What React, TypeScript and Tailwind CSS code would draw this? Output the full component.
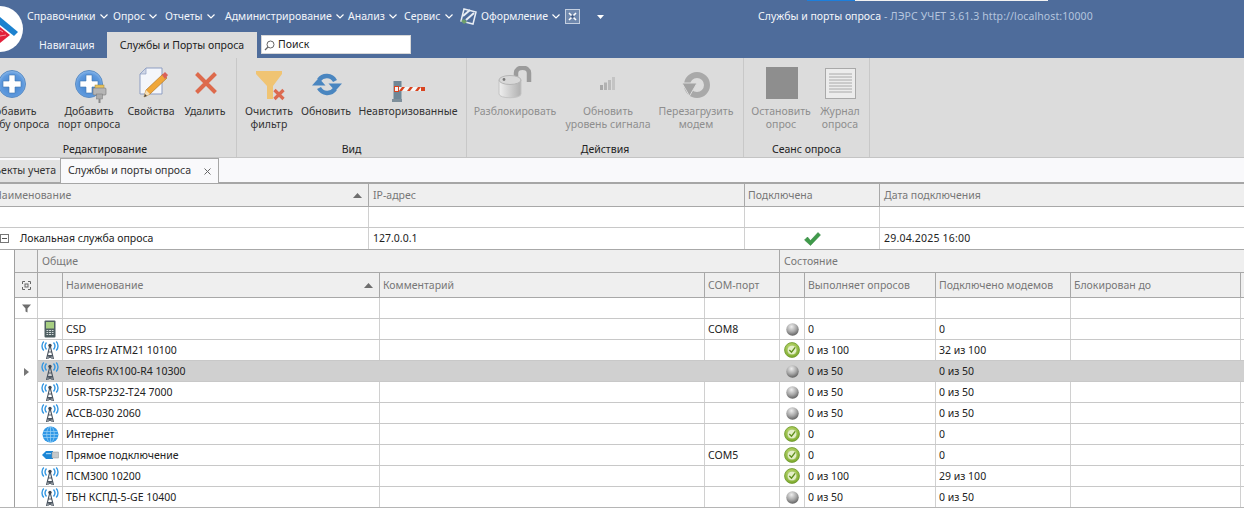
import React from "react";

const F = "font-['Noto_Sans','Liberation_Sans',sans-serif]";

function Sphere({ port = false }: { port?: boolean }) {
  return (
    <svg width="36" height="34" viewBox="0 0 36 34" className="ml-[8px] mt-[8px]">
      <defs>
        <radialGradient id="sph" cx="50%" cy="55%" r="65%">
          <stop offset="0%" stopColor="#3f7fca" />
          <stop offset="65%" stopColor="#5f9ade" />
          <stop offset="100%" stopColor="#b4d4f3" />
        </radialGradient>
      </defs>
      <circle cx="14" cy="14" r="13.500" fill="url(#sph)" stroke="#5a8cc4" />
      <path d="M11 5h6v6h6v6h-6v6h-6v-6H5v-6h6z" fill="#fff" stroke="#3f75b0" strokeWidth="0.600" />
      {port && (
        <g>
          <rect x="20" y="15" width="9" height="4" fill="#e9c35f" stroke="#a98a35" strokeWidth="0.500" />
          <rect x="18" y="18" width="13" height="7" rx="1" fill="#b5b5b5" stroke="#777" strokeWidth="0.600" />
          <rect x="21.500" y="24" width="6" height="5" fill="#aaa" stroke="#777" strokeWidth="0.500" />
          <path d="M24.500 29v4" stroke="#888" strokeWidth="2" />
        </g>
      )}
    </svg>
  );
}

function Doc() {
  return (
    <svg width="30" height="32" viewBox="0 0 30 32" className="ml-[5px]">
      <path d="M7 1h16v26H1V7z" fill="#f4f6fb" stroke="#8d9dc2" />
      <path d="M7 1v6H1z" fill="#cfd6e6" stroke="#8d9dc2" strokeWidth="0.700" />
      <path d="M5 30l2-7L24 7l4 4-17 16z" fill="#f0a73a" stroke="#a96d1a" strokeWidth="0.600" />
      <path d="M23 8l3-3 3 3-3 4z" fill="#d9615a" />
      <path d="M5 30l2-7 4 4z" fill="#f5dfb8" />
      <path d="M5 30l1-3 2 2z" fill="#444" />
    </svg>
  );
}

function Cross() {
  return (
    <svg width="24" height="24" viewBox="0 0 24 24" className="ml-[1px]">
      <path d="M2.500 2.500l19 19M21.500 2.500l-19 19" stroke="#dd6a4c" strokeWidth="4" />
    </svg>
  );
}

function Funnel() {
  return (
    <svg width="30" height="30" viewBox="0 0 30 30" className="ml-[4px] mt-[5px]">
      <path d="M0 0h26v3L17 15v13h-6V15L0 3z" fill="#f0c473" />
      <path d="M18.500 19l9 9M27.500 19l-9 9" stroke="#dc6a50" strokeWidth="3.200" />
    </svg>
  );
}

function Refresh() {
  return (
    <svg width="30" height="23" viewBox="0 0 30 23" className="ml-[2px] mt-[2px]">
      <g fill="none" stroke="#4a86c0" strokeWidth="4.500">
        <path d="M7 7A9.500 9.500 0 0 1 23 8" />
        <path d="M23 16A9.500 9.500 0 0 1 7 15" />
      </g>
      <path d="M16.500 10.500H30L23.250 18z" fill="#4a86c0" />
      <path d="M0 12.500h13.500L6.750 5z" fill="#4a86c0" />
    </svg>
  );
}

function Barrier() {
  return (
    <svg width="33" height="32" viewBox="0 0 33 32" className="mt-[8px] ml-[1px]">
      <rect x="1.500" y="10" width="8" height="18" fill="#6f8796" />
      <rect x="0" y="28" width="10" height="3" fill="#7e8f9b" />
      <rect x="2" y="16" width="31" height="4" fill="#f5f5f5" />
      <path d="M7 20l3-4h3l-3 4zM15 20l3-4h3l-3 4zM23 20l3-4h3l-3 4z" fill="#d9441f" />
      <rect x="29" y="16" width="4" height="4" fill="#d9441f" />
      <rect x="2.500" y="15.500" width="4" height="5" fill="#f5f5f5" stroke="#d9441f" />
    </svg>
  );
}

function Lock() {
  return (
    <svg width="34" height="34" viewBox="0 0 34 34">
      <defs>
        <linearGradient id="lk" x1="0" x2="1">
          <stop offset="0" stopColor="#efefef" />
          <stop offset="1" stopColor="#b0b0b0" />
        </linearGradient>
      </defs>
      <path d="M18 14V7c0-7 13-7 13 0v9" fill="none" stroke="#9b9b9b" strokeWidth="4.500" />
      <path d="M1 14v14c0 5 22 5 22 0V14z" fill="url(#lk)" stroke="#c4c4c4" />
      <ellipse cx="12" cy="14" rx="11" ry="4.500" fill="#d8d8d8" stroke="#b5b5b5" />
      <circle cx="6" cy="13.500" r="1.400" fill="#777" />
    </svg>
  );
}

function Signal() {
  return (
    <svg width="16" height="13" viewBox="0 0 16 13">
      <rect x="0" y="8" width="3" height="5" fill="#a8a8a8" />
      <rect x="4" y="5.500" width="3" height="7.500" fill="#b2b2b2" />
      <rect x="8" y="3" width="3" height="10" fill="#bbbbbb" />
      <rect x="12" y="0" width="3" height="13" fill="#c4c4c4" />
    </svg>
  );
}

function Reload() {
  return (
    <svg width="32" height="30" viewBox="0 0 32 30" className="mt-[3px]">
      <circle cx="17" cy="15" r="10" fill="none" stroke="#a9a9a9" strokeWidth="6" />
      <path d="M2 13h15l-7.500 13z" fill="#a3a3a3" stroke="#dcdcdc" strokeWidth="1" />
    </svg>
  );
}

function Journal() {
  return (
    <svg width="31" height="31" viewBox="0 0 31 31" className="mt-[1px]">
      <rect x="0.500" y="0.500" width="30" height="30" fill="#ececec" stroke="#a9a9a9" />
      <path d="M4 6h23M4 9h23M4 12h23M4 15h23M4 18h23M4 21h23M4 24h23" stroke="#9a9a9a" strokeWidth="0.800" />
    </svg>
  );
}

function Antenna() {
  return (
    <svg width="18" height="18" viewBox="0 0 18 18">
      <g fill="none" stroke="#3497e2" strokeWidth="1.400">
        <path d="M5.500 1.500C3.800 3.500 3.800 6.500 5.500 8.500" />
        <path d="M2.800 0.500C0.400 3 0.400 7 2.800 9.500" />
        <path d="M12.500 1.500C14.200 3.500 14.200 6.500 12.500 8.500" />
        <path d="M15.200 0.500C17.600 3 17.600 7 15.200 9.500" />
      </g>
      <g fill="none" stroke="#4b5560" strokeWidth="1.100">
        <path d="M9 4L5.500 18M9 4l3.500 14M7.300 11h3.400M6.500 14.500h5M6.500 14.500l5 3M11.500 14.500l-5 3" />
      </g>
      <circle cx="9" cy="4.500" r="1.700" fill="#3d4650" />
    </svg>
  );
}

function Phone() {
  return (
    <svg width="12" height="18" viewBox="0 0 12 18">
      <rect x="0.500" y="0.500" width="11" height="17" rx="1" fill="#4f5f62" />
      <rect x="2" y="2" width="8" height="6.500" fill="#a7cf82" />
      <path d="M2.500 10.500h7M2.500 12.500h7M2.500 14.500h7" stroke="#d3dadb" strokeWidth="1" />
      <path d="M4.500 10v6M7.500 10v6" stroke="#4f5f62" strokeWidth="0.800" />
    </svg>
  );
}

function Globe() {
  return (
    <svg width="17" height="17" viewBox="0 0 17 17">
      <circle cx="8.500" cy="8.500" r="8" fill="#2f97e6" />
      <g fill="none" stroke="#9dd2f5" strokeWidth="0.700">
        <ellipse cx="8.500" cy="8.500" rx="3.800" ry="8" />
        <path d="M8.500 0.500v16M1 5.500h15M0.500 8.500h16M1 11.500h15" />
      </g>
    </svg>
  );
}

function Usb() {
  return (
    <svg width="17" height="10" viewBox="0 0 17 10">
      <path d="M0 5l4-4h7v8H4z" fill="#1b86d6" />
      <rect x="10" y="2" width="6.500" height="6" fill="#c6c9cb" stroke="#8d9092" strokeWidth="0.500" />
      <rect x="4" y="3" width="5" height="1.200" fill="#9fd3f6" />
    </svg>
  );
}

function Gray() {
  return (
    <svg width="13" height="13" viewBox="0 0 13 13">
      <defs>
        <radialGradient id="gr" cx="42%" cy="28%" r="75%">
          <stop offset="0" stopColor="#eeeeee" />
          <stop offset="0.55" stopColor="#a8a8a8" />
          <stop offset="1" stopColor="#5e5e5e" />
        </radialGradient>
      </defs>
      <circle cx="6.500" cy="6.500" r="6.200" fill="url(#gr)" />
    </svg>
  );
}

function GreenOk() {
  return (
    <svg width="16" height="16" viewBox="0 0 15 15">
      <defs>
        <radialGradient id="gn" cx="45%" cy="35%" r="75%">
          <stop offset="0" stopColor="#c8e27a" />
          <stop offset="1" stopColor="#6f9f1f" />
        </radialGradient>
      </defs>
      <circle cx="7.500" cy="7.500" r="7" fill="url(#gn)" stroke="#6a962a" strokeWidth="0.700" />
      <circle cx="7.500" cy="7.500" r="4.500" fill="#e4efc8" stroke="#8eb548" strokeWidth="0.500" />
      <path d="M5 7.500l2 2 3.500-4.500" fill="none" stroke="#5f8f1c" strokeWidth="1.300" />
    </svg>
  );
}

function Btn({
  w,
  icon,
  label,
  dim = false,
}: {
  w: string;
  icon: React.ReactNode;
  label: React.ReactNode;
  dim?: boolean;
}) {
  return (
    <div className={`${w} shrink-0 flex flex-col items-center`}>
      <div className="h-[42px] w-full flex items-center justify-center">{icon}</div>
      <div className={`mt-[1px] text-center whitespace-nowrap leading-[13px] ${dim ? "text-[#8e8e8e]" : "text-[#333]"}`}>
        {label}
      </div>
    </div>
  );
}

function Group({ w, title, children }: { w: string; title: string; children: React.ReactNode }) {
  return (
    <div className={`${w} shrink-0 flex flex-col border-r border-[#c8c8c8]`}>
      <div className="flex flex-1 pt-[4px]">{children}</div>
      <div className="h-[16px] leading-[16px] text-center text-[#222]">{title}</div>
    </div>
  );
}

const Menu = ({ t, w }: { t: string; w: string }) => (
  <div className={`${w} shrink-0 flex items-center gap-[4px] whitespace-nowrap`}>
    <span>{t}</span>
    <svg width="8" height="5" viewBox="0 0 8 5">
      <path d="M0.500 0.500L4 4l3.500-3.500" fill="none" stroke="#fff" strokeWidth="1.200" />
    </svg>
  </div>
);

const master = "grid grid-cols-[373px_376px_135px_1fr] -ml-[4px]";
const detail = "grid grid-cols-[23px_25px_317px_325px_75px_25px_131px_135px_170px_100px] w-[1326px]";

const hc = "border-r border-[#a8a8a8] px-[3px] pt-[1px] flex items-center whitespace-nowrap text-[#777] bg-[#efefef]";
const fc = "border-r border-[#d0d0d0]";
const tc = "border-r border-[#d0d0d0] flex items-center px-[3px] pt-[1px] whitespace-nowrap";

type R = {
  icon: React.ReactNode;
  name: string;
  com?: string;
  ok: boolean;
  a: string;
  b: string;
  sel?: boolean;
};

const rows: R[] = [
  { icon: <Phone />, name: "CSD", com: "COM8", ok: false, a: "0", b: "0" },
  { icon: <Antenna />, name: "GPRS Irz ATM21 10100", ok: true, a: "0 из 100", b: "32 из 100" },
  { icon: <Antenna />, name: "Teleofis RX100-R4 10300", ok: false, a: "0 из 50", b: "0 из 50", sel: true },
  { icon: <Antenna />, name: "USR-TSP232-T24 7000", ok: false, a: "0 из 50", b: "0 из 50" },
  { icon: <Antenna />, name: "АССВ-030 2060", ok: false, a: "0 из 50", b: "0 из 50" },
  { icon: <Globe />, name: "Интернет", ok: true, a: "0", b: "0" },
  { icon: <Usb />, name: "Прямое подключение", com: "COM5", ok: true, a: "0", b: "0" },
  { icon: <Antenna />, name: "ПСМ300 10200", ok: true, a: "0 из 100", b: "29 из 100" },
  { icon: <Antenna />, name: "ТБН КСПД-5-GE 10400", ok: false, a: "0 из 50", b: "0 из 50" },
];

export default function App() {
  return (
    <div className={`w-[1244px] h-[529px] overflow-hidden relative bg-white text-[10.5px] ${F}`}>
      {/* Header */}
      <div className="h-[58px] bg-[#4e6c9b] relative">
        <div className="absolute top-0 left-[807px] w-[48px] h-[1px] bg-[#1c7fdc]" />
        <div className="absolute top-0 left-[855px] w-[193px] h-[1px] bg-[#f2f2f2]" />
        <div className="h-[32px] flex items-center pl-[27px] pt-[1px] text-[#f2f5fa]">
          <Menu t="Справочники" w="w-[86px]" />
          <Menu t="Опрос" w="w-[52px]" />
          <Menu t="Отчеты" w="w-[60px]" />
          <Menu t="Администрирование" w="w-[123px]" />
          <Menu t="Анализ" w="w-[56px]" />
          <Menu t="Сервис" w="w-[56px]" />
          <svg width="17" height="17" viewBox="0 0 17 17" className="shrink-0 mr-[4px]">
            <path d="M4 1l12 3-3 12-12-3z" fill="none" stroke="#e8edf4" strokeWidth="1.500" />
            <path d="M3 8L10 2M6 12l8-7" stroke="#e8edf4" strokeWidth="2" />
            <path d="M1 13l3 3 3-2-3-3z" fill="#6fa06a" />
          </svg>
          <Menu t="Оформление" w="w-[84px]" />
          <svg width="15" height="15" viewBox="0 0 15 15" className="shrink-0">
            <rect x="0.500" y="0.500" width="14" height="14" fill="#6f88ad" stroke="#c4cfe0" />
            <path d="M4 4l7 7M11 4l-7 7" stroke="#fff" strokeWidth="1.600" />
            <circle cx="7.500" cy="7.500" r="1.500" fill="#3c5680" />
          </svg>
          <svg width="7" height="4" viewBox="0 0 7 4" className="shrink-0 ml-[17px]">
            <path d="M0 0h7L3.500 4z" fill="#fff" />
          </svg>
          <div className="ml-[154px] whitespace-nowrap">
            <span className="text-[#f4f6fa]">Службы и порты опроса</span>
            <span className="text-[#b5c5de] tracking-[0.1px]"> - ЛЭРС УЧЕТ 3.61.3 http://localhost:10000</span>
          </div>
        </div>
        <div className="h-[26px] flex pl-[39px]">
          <div className="w-[68px] pt-[5px] text-[#f2f5fa] leading-[16px]">Навигация</div>
          <div className="w-[150px] bg-[#dcdcdc] text-center pt-[5px] text-[#222] leading-[16px]">Службы и Порты опроса</div>
          <div className="ml-[4px] mt-[3px] w-[150px] h-[19px] bg-white border border-[#d8d8d8] flex items-center pl-[2px] pt-[1px] gap-[3px] text-[#222]">
            <svg width="11" height="11" viewBox="0 0 11 11">
              <circle cx="6.500" cy="4.500" r="3.500" fill="none" stroke="#666" />
              <path d="M4 7L1 10" stroke="#666" strokeWidth="1.300" />
            </svg>
            Поиск
          </div>
        </div>
      </div>
      {/* Logo */}
      <svg width="46" height="46" viewBox="0 0 46 46" className="absolute -left-[23px] top-[6px]">
        <circle cx="23" cy="23" r="23" fill="#fff" />
        <path d="M23 11l18 15-4 4-14-11z" fill="#1c82cf" />
        <path d="M23 21l10 8-10 8z" fill="#e3203a" />
        <path d="M23 24l3 2M23 30l6-1" stroke="#f6b7bf" strokeWidth="0.800" />
      </svg>
      {/* Ribbon */}
      <div className="h-[100px] bg-[#dcdcdc] border-b border-[#c4c4c4] flex -ml-[26px]">
        <Group w="w-[263px]" title="Редактирование">
          <Btn w="w-[76px]" icon={<Sphere />} label={<>Добавить<br />службу опроса</>} />
          <Btn w="w-[78px]" icon={<Sphere port />} label={<>Добавить<br />порт опроса</>} />
          <Btn w="w-[46px]" icon={<Doc />} label="Свойства" />
          <Btn w="w-[62px]" icon={<Cross />} label="Удалить" />
        </Group>
        <Group w="w-[230px]" title="Вид">
          <Btn w="w-[64px]" icon={<Funnel />} label={<>Очистить<br />фильтр</>} />
          <Btn w="w-[50px]" icon={<Refresh />} label="Обновить" />
          <Btn w="w-[114px]" icon={<Barrier />} label="Неавторизованные" />
        </Group>
        <Group w="w-[277px]" title="Действия">
          <Btn dim w="w-[96px]" icon={<Lock />} label="Разблокировать" />
          <Btn dim w="w-[90px]" icon={<Signal />} label={<>Обновить<br />уровень сигнала</>} />
          <Btn dim w="w-[86px]" icon={<Reload />} label={<>Перезагрузить<br />модем</>} />
        </Group>
        <Group w="w-[126px]" title="Сеанс опроса">
          <Btn dim w="w-[74px]" icon={<div className="w-[32px] h-[32px] ml-[2px] bg-[#8e8e8e]" />} label={<>Остановить<br />опрос</>} />
          <Btn dim w="w-[44px]" icon={<Journal />} label={<>Журнал<br />опроса</>} />
        </Group>
      </div>
      {/* Doc tabs */}
      <div className="h-[26px] bg-[#f9f9fb] border-b-2 border-[#a6a6a6] flex items-end">
        <div className="w-[60px] h-[22px] bg-[#e2e2e2] flex items-center justify-end pr-[4px] whitespace-nowrap text-[#333] overflow-hidden">
          Объекты учета
        </div>
        <div className="w-[159px] h-[25px] -mb-[1px] bg-[#f9f9fb] border-x border-t border-[#a6a6a6] flex items-center pl-[7px] text-[#333]">
          <span className="w-[136px] whitespace-nowrap">Службы и порты опроса</span>
          <svg width="7" height="7" viewBox="0 0 7 7">
            <path d="M0.500 0.500l6 6M6.500 0.500l-6 6" stroke="#666" />
          </svg>
        </div>
      </div>
      {/* Master grid */}
      <div className={`${master} h-[23px] border-b border-[#a8a8a8]`}>
        <div className={`${hc} justify-between pr-[6px]`}>
          <span className="-ml-[5px]">Наименование</span>
          <svg width="9" height="5" viewBox="0 0 9 5">
            <path d="M0 5h9L4.500 0z" fill="#6e6e6e" />
          </svg>
        </div>
        <div className={`${hc} pl-[4px]`}>IP-адрес</div>
        <div className={hc}>Подключена</div>
        <div className={`${hc} border-r-0 pl-[4px]`}>Дата подключения</div>
      </div>
      <div className={`${master} h-[21px] border-b border-[#c8c8c8]`}>
        <div className={fc} />
        <div className={fc} />
        <div className={fc} />
        <div />
      </div>
      <div className={`${master} h-[22px] border-b border-[#a8a8a8] text-[#222]`}>
        <div className={`${fc} flex items-center pl-[4px] gap-[11px] whitespace-nowrap`}>
          <svg width="9" height="9" viewBox="0 0 9 9" className="shrink-0">
            <rect x="0.500" y="0.500" width="8" height="8" fill="#fff" stroke="#777" />
            <path d="M2 4.500h5" stroke="#555" />
          </svg>
          Локальная служба опроса
        </div>
        <div className={`${tc} pl-[4px]`}>127.0.0.1</div>
        <div className={`${fc} flex items-center justify-center`}>
          <svg width="17" height="14" viewBox="0 0 17 14">
            <path d="M0.500 8l3-3 3 3.500L14 0.500l2.500 2.500L6.500 13.500z" fill="#3f9a4a" stroke="#2f7f3a" strokeWidth="0.500" />
          </svg>
        </div>
        <div className="flex items-center pl-[4px] pt-[1px] tracking-[0.2px]">29.04.2025 16:00</div>
      </div>
      {/* Detail grid */}
      <div className="pl-[14px] relative">
        <div className="border-l border-[#a0a0a0]">
          <div className={`${detail} h-[23px] border-b border-[#a8a8a8]`}>
            <div className={hc} />
            <div className={`${hc} col-span-4 pl-[4px]`}>Общие</div>
            <div className={`${hc} col-span-5 pl-[4px]`}>Состояние</div>
          </div>
          <div className={`${detail} h-[25px] border-b border-[#a8a8a8]`}>
            <div className={`${hc} justify-center px-0`}>
              <svg width="9" height="9" viewBox="0 0 9 9">
                <path d="M0.500 3V0.500H3M6 0.500h2.500V3M8.500 6v2.500H6M3 8.500H0.500V6" fill="none" stroke="#666" />
                <rect x="3" y="3" width="3" height="3" fill="none" stroke="#666" />
              </svg>
            </div>
            <div className={hc} />
            <div className={`${hc} justify-between pr-[6px]`}>
              <span>Наименование</span>
              <svg width="9" height="5" viewBox="0 0 9 5">
                <path d="M0 5h9L4.500 0z" fill="#6e6e6e" />
              </svg>
            </div>
            <div className={hc}>Комментарий</div>
            <div className={hc}>COM-порт</div>
            <div className={hc} />
            <div className={hc}>Выполняет опросов</div>
            <div className={hc}>Подключено модемов</div>
            <div className={hc}>Блокирован до</div>
            <div className={hc} />
          </div>
          <div className={`${detail} h-[21px] border-b border-[#c8c8c8]`}>
            <div className={`${fc} flex items-center justify-center border-[#a8a8a8]`}>
              <svg width="9" height="9" viewBox="0 0 9 9">
                <path d="M0 0.500h9L5.500 4.500V8.500L3.500 7.500V4.500z" fill="#6e6e6e" />
              </svg>
            </div>
            {Array.from({ length: 9 }).map((_, i) => (
              <div key={i} className={fc} />
            ))}
          </div>
          {rows.map((r) => (
            <div key={r.name} className={`${detail} h-[21px] text-[#222]`}>
              <div className="border-r border-[#c8c8c8] flex items-center justify-center">
                {r.sel && (
                  <svg width="5" height="8" viewBox="0 0 5 8">
                    <path d="M0 0l5 4-5 4z" fill="#777" />
                  </svg>
                )}
              </div>
              <div className={`col-span-9 grid grid-cols-subgrid border-b border-[#c8c8c8] ${r.sel ? "bg-[#d0d0d0]" : ""}`}>
                <div className={`${fc} flex items-center justify-center`}>{r.icon}</div>
                <div className={tc}>{r.name}</div>
                <div className={fc} />
                <div className={tc}>{r.com}</div>
                <div className={`${fc} flex items-center justify-center`}>{r.ok ? <GreenOk /> : <Gray />}</div>
                <div className={tc}>{r.a}</div>
                <div className={tc}>{r.b}</div>
                <div className={fc} />
                <div className={fc} />
              </div>
            </div>
          ))}
        </div>
        <div className="absolute left-0 right-0 bottom-0 h-[1px] bg-[#b5b5b5]" />
      </div>
    </div>
  );
}
